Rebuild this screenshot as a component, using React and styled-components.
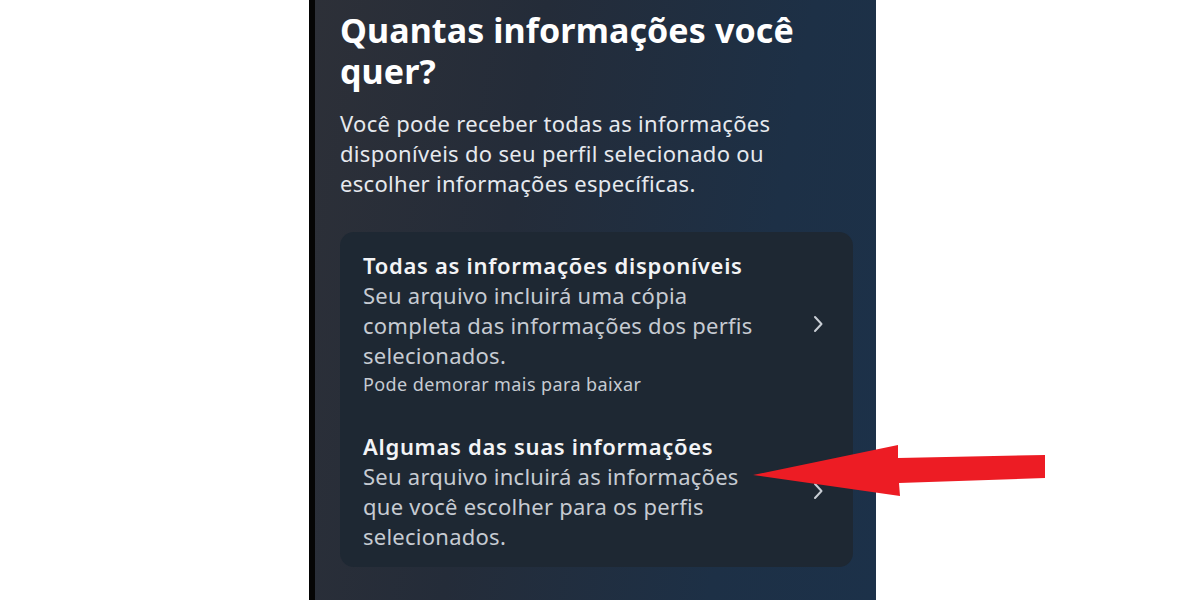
import styled, { createGlobalStyle } from 'styled-components';

const GlobalStyle = createGlobalStyle`
  html, body {
    margin: 0;
    padding: 0;
    background: #ffffff;
  }
  body {
    font-family: "Noto Sans", "Open Sans", sans-serif;
  }
`;

const Page = styled.div`
  position: relative;
  width: 1200px;
  height: 600px;
  overflow: hidden;
  background: #ffffff;
`;

const Phone = styled.div`
  box-sizing: border-box;
  margin-left: 309px;
  width: 567px;
  height: 600px;
  border-left: 6px solid #050505;
  background: linear-gradient(100deg, #2d3038 0%, #242c39 35%, #1d3046 75%, #1c3149 100%);
  padding: 10px 23px 0 25px;
  color: #ffffff;
`;

const Title = styled.h1`
  margin: 0;
  font-size: 34px;
  font-weight: 700;
  line-height: 41px;
  letter-spacing: 0.1px;
  color: #ffffff;
`;

const Lead = styled.p`
  margin: 16px 0 0;
  font-size: 22px;
  line-height: 30px;
  letter-spacing: 0.3px;
  color: #e6e9ee;
`;

const Card = styled.div`
  margin-top: 34px;
  width: 513px;
  background: #1e2833;
  border-radius: 14px;
  padding: 18px 0 16px;
`;

const Option = styled.div`
  display: flex;
  align-items: center;
  margin-top: ${p => (p.$gap ? '33px' : '0')};
`;

const OptionText = styled.div`
  flex: 1;
  padding-left: 23px;
`;

const OptionTitle = styled.div`
  font-size: 22px;
  font-weight: 600;
  line-height: 30px;
  letter-spacing: 0.7px;
  color: #f3f4f6;
`;

const OptionDesc = styled.div`
  font-size: 22px;
  line-height: 30px;
  letter-spacing: 0.25px;
  color: #c6cbd2;
`;

const Note = styled.div`
  font-size: 18px;
  line-height: 28px;
  letter-spacing: 0.4px;
  color: #c6cbd2;
`;

const Chevron = styled.svg`
  width: 12px;
  height: 18px;
  margin-right: 29px;
  flex-shrink: 0;
`;

const Arrow = styled.svg`
  position: absolute;
  left: 0;
  top: 0;
  pointer-events: none;
`;

const ChevronIcon = () => (
  <Chevron viewBox="0 0 12 18">
    <path d="M3 2 L9.5 9 L3 16" fill="none" stroke="#c9ced5" strokeWidth="2" strokeLinecap="round" strokeLinejoin="round" />
  </Chevron>
);

export default function App() {
  return (
    <Page>
      <GlobalStyle />
      <Phone>
        <Title>Quantas informações você<br />quer?</Title>
        <Lead>
          Você pode receber todas as informações<br />
          disponíveis do seu perfil selecionado ou<br />
          escolher informações específicas.
        </Lead>
        <Card>
          <Option>
            <OptionText>
              <OptionTitle>Todas as informações disponíveis</OptionTitle>
              <OptionDesc>
                Seu arquivo incluirá uma cópia<br />
                completa das informações dos perfis<br />
                selecionados.
              </OptionDesc>
              <Note>Pode demorar mais para baixar</Note>
            </OptionText>
            <ChevronIcon />
          </Option>
          <Option $gap>
            <OptionText>
              <OptionTitle>Algumas das suas informações</OptionTitle>
              <OptionDesc>
                Seu arquivo incluirá as informações<br />
                que você escolher para os perfis<br />
                selecionados.
              </OptionDesc>
            </OptionText>
            <ChevronIcon />
          </Option>
        </Card>
      </Phone>
      <Arrow width="1200" height="600" viewBox="0 0 1200 600">
        <polygon
          points="753,475 898,445 898,458 1045,455 1045,478 899,483 900,496"
          fill="#ed1c24"
        />
      </Arrow>
    </Page>
  );
}
